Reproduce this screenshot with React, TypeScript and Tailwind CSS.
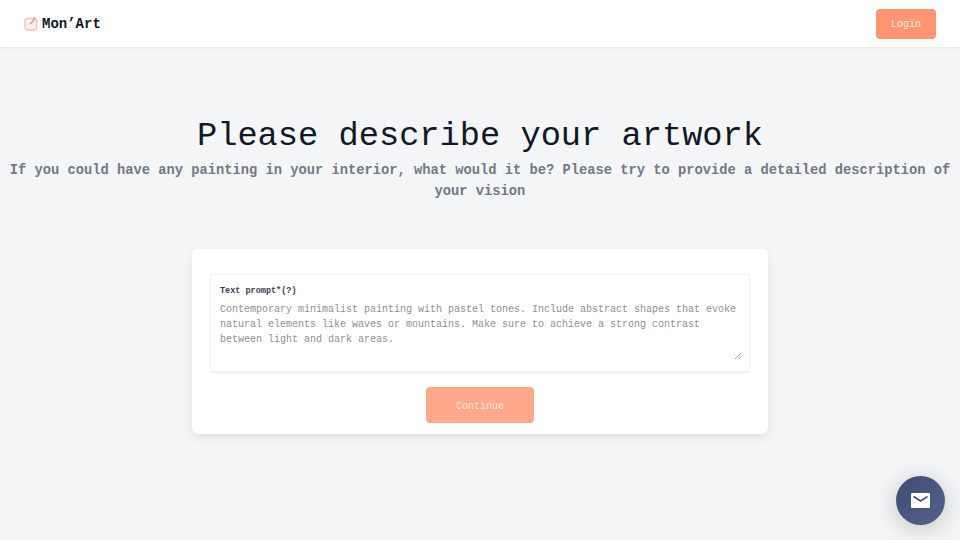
export default function App() {
  const mono = "font-['Liberation_Mono','DejaVu_Sans_Mono',monospace]";
  return (
    <div className={`relative h-[540px] w-[960px] overflow-hidden bg-[#f4f5f6] ${mono}`}>
      <header className="flex h-[47px] items-center justify-between bg-white pl-6 pr-6 shadow-[0_1px_3px_rgba(0,0,0,0.05)]">
        <div className="flex items-center gap-[4px]">
          <svg width="14" height="14" viewBox="0 0 14 14" fill="none">
            <rect x="1" y="1.5" width="11.5" height="11.5" rx="2.2" fill="#fdf1ed" stroke="#e8c4ba" strokeWidth="1.3" />
            <path d="M6.5 6.5C8 5.5 9.8 3.8 10.5 1" stroke="#ef9478" strokeWidth="1.5" strokeLinecap="round" />
          </svg>
          <span className="text-[14px] font-bold leading-none text-[#111827]">Mon’Art</span>
        </div>
        <button className="mt-[1px] h-[30px] w-[60px] rounded-[4px] bg-[#ff9470] text-[10px] text-[#fff1e6]">Login</button>
      </header>

      <main className="flex flex-col items-center pt-[68px]">
        <h1 className="text-[33.7px] leading-[42px] text-[#111827]">Please describe your artwork</h1>
        <p className="mt-[3px] w-[950px] text-center text-[13.75px] font-bold leading-[21px] text-[#727985]">
          If you could have any painting in your interior, what would it be? Please try to provide a detailed description of your vision
        </p>

        <section className="mt-[47px] flex h-[185px] w-[576px] flex-col items-center rounded-[6px] bg-white px-[18px] pt-[25px] shadow-[0_4px_8px_rgba(0,0,0,0.08),0_0_3px_rgba(0,0,0,0.02)]">
          <div className="relative flex h-[98px] w-[540px] flex-col rounded-[4px] border border-[#f2f3f4] bg-white px-[9px] pt-[10px] shadow-[0_1px_2px_rgba(0,0,0,0.09)]">
            <label className="text-[8.5px] font-bold leading-[12px] text-[#374151]">Text prompt*(?)</label>
            <textarea
              className="mt-[5px] h-[64px] w-full resize-none bg-transparent text-[10px] leading-[15px] outline-none placeholder:text-[#8b9099]"
              placeholder="Contemporary minimalist painting with pastel tones. Include abstract shapes that evoke natural elements like waves or mountains. Make sure to achieve a strong contrast between light and dark areas."
            />
            <svg className="absolute bottom-[11px] right-[7px]" width="8" height="8" viewBox="0 0 8 8" fill="none">
              <path d="M1 7L7 1M4.5 7L7 4.5" stroke="#8f8f8f" strokeWidth="0.9" />
            </svg>
          </div>
          <button className="mt-[15px] h-[36px] w-[108px] rounded-[4px] bg-[#ffa78b] pt-[2px] text-[10px] text-[#ffeadd]">Continue</button>
        </section>
      </main>

      <button className="absolute bottom-[15px] right-[15px] flex h-[49px] w-[49px] items-center justify-center rounded-full bg-linear-to-br from-[#414b74] to-[#56628c] shadow-[0_4px_24px_rgba(0,0,0,0.2)]">
        <svg width="19" height="15" viewBox="0 0 19 15">
          <rect width="19" height="15" rx="1" fill="#ffffff" />
          <path d="M2.5 3.5l7 4.5 7-4.5" fill="none" stroke="#414b74" strokeWidth="1.5" />
        </svg>
      </button>
    </div>
  );
}
